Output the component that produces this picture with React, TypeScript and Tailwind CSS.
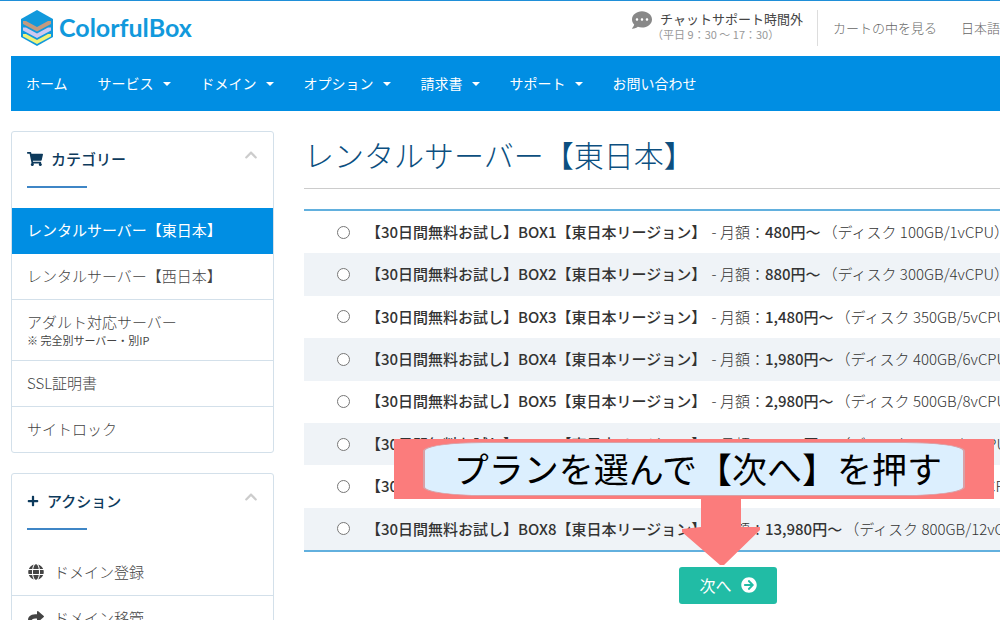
import type { ReactNode } from 'react';
import {
  FaArrowCircleRight,
  FaChevronUp,
  FaCommentDots,
  FaGlobe,
  FaPlus,
  FaShare,
  FaShoppingCart,
} from 'react-icons/fa';

const navItems = [
  { label: 'ホーム', menu: false },
  { label: 'サービス', menu: true },
  { label: 'ドメイン', menu: true },
  { label: 'オプション', menu: true },
  { label: '請求書', menu: true },
  { label: 'サポート', menu: true },
  { label: 'お問い合わせ', menu: false },
];

const categories = [
  { label: 'レンタルサーバー【東日本】', active: true },
  { label: 'レンタルサーバー【西日本】' },
  { label: 'アダルト対応サーバー', note: '※ 完全別サーバー・別IP' },
  { label: 'SSL証明書' },
  { label: 'サイトロック' },
];

const plans = [
  { name: 'BOX1', price: '480', spec: '100GB/1vCPU' },
  { name: 'BOX2', price: '880', spec: '300GB/4vCPU' },
  { name: 'BOX3', price: '1,480', spec: '350GB/5vCPU' },
  { name: 'BOX4', price: '1,980', spec: '400GB/6vCPU' },
  { name: 'BOX5', price: '2,980', spec: '500GB/8vCPU' },
  { name: 'BOX6', price: '4,980', spec: '600GB/8vCPU' },
  { name: 'BOX7', price: '7,980', spec: '700GB/10vCPU' },
  { name: 'BOX8', price: '13,980', spec: '800GB/12vCPU' },
];

function Logo() {
  return (
    <a href="#" className="flex items-center gap-1.5">
      <svg viewBox="0 0 32 36" className="h-9 w-8" aria-hidden="true">
        <path d="M16 0 32 9v18L16 36 0 27V9z" fill="#1199dc" />
        <path d="M2 11 5 11 16 17 27 11 30 11V14L16 21.500 2 14z" fill="#c39a80" />
        <path d="M2 17.500 5 17.500 16 23.500 27 17.500 30 17.500V20.500L16 28 2 20.500z" fill="#cfc8f0" />
        <path d="M2 24 5 24 16 30 27 24 30 24V26.500L16 34 2 26.500z" fill="#f0f278" />
      </svg>
      <span className="font-['Lato',sans-serif] text-[25px] font-bold text-[#1199dc]">ColorfulBox</span>
    </a>
  );
}

function PanelHeader({ icon, title }: { icon: ReactNode; title: string }) {
  return (
    <div className="flex h-[76px] items-start justify-between px-[15px] pt-4">
      <h2 className="relative flex h-10 items-start gap-2 text-[15px] leading-[22px] font-medium text-[#0d3a5c]">
        <span className="flex h-[22px] items-center">{icon}</span>
        {title}
        <span className="absolute bottom-0 left-0 h-0.5 w-[60px] bg-[#3f86c6]" />
      </h2>
      <button type="button" aria-label={`${title}を閉じる`} className="text-[#ccc]">
        <FaChevronUp className="size-3.5" />
      </button>
    </div>
  );
}

export default function App() {
  return (
    <div className="h-screen min-h-[620px] overflow-hidden border-t border-[#1f8fd8] bg-white pl-[11px] font-['Noto_Sans_CJK_JP',sans-serif] text-[#333]">
      <header className="flex h-[55px] items-center justify-between pb-0.5 pl-2.5">
        <Logo />
        <div className="flex items-center text-[13px] whitespace-nowrap text-[#666]">
          <div className="flex h-9 items-start gap-2 border-r border-[#ddd] pr-3.5">
            <FaCommentDots className="size-5 text-[#888]" />
            <div>
              <p className="leading-[18px] text-[#444]">チャットサポート時間外</p>
              <p className="-ml-2 text-[11px] leading-3 text-[#999]">（平日 9：30 〜 17：30）</p>
            </div>
          </div>
          <a href="#" className="ml-[15px] font-light">カートの中を見る</a>
          <a href="#" className="ml-6 font-light">日本語</a>
        </div>
      </header>

      <nav className="flex h-[55px] items-center gap-[30px] bg-[#008ee3] px-[15px] pb-0.5 text-sm whitespace-nowrap text-white">
        {navItems.map((item) => (
          <a key={item.label} href="#" className="flex items-center gap-[9px]">
            {item.label}
            {item.menu && <span className="mt-0.5 border-x-4 border-t-4 border-x-transparent border-t-white" />}
          </a>
        ))}
      </nav>

      <div className="flex items-start gap-[30px] pt-5">
        <aside className="flex w-[263px] shrink-0 flex-col gap-5">
          <section className="rounded-[3px] border border-[#d3e0ea]">
            <PanelHeader icon={<FaShoppingCart className="size-4" />} title="カテゴリー" />
            <ul className="text-[15px] leading-[23px]">
              {categories.map((cat) => (
                <li
                  key={cat.label}
                  className={
                    cat.active
                      ? 'border-b border-[#008ee3] bg-[#008ee3] text-white'
                      : 'border-b border-[#d3e0ea] font-light text-[#444] last:border-b-0'
                  }
                >
                  <a href="#" className="block px-[15px] pt-2.5 pb-3">
                    {cat.label}
                    {cat.note && <span className="block text-[11px] leading-[15px] font-normal">{cat.note}</span>}
                  </a>
                </li>
              ))}
            </ul>
          </section>

          <section className="rounded-[3px] border border-[#d3e0ea]">
            <PanelHeader icon={<FaPlus className="size-3" />} title="アクション" />
            <ul className="text-[15px] leading-[23px] font-light text-[#444]">
              <li className="border-b border-[#d3e0ea]">
                <a href="#" className="flex items-center gap-2.5 px-4 pt-2.5 pb-3">
                  <FaGlobe className="size-4" />
                  ドメイン登録
                </a>
              </li>
              <li>
                <a href="#" className="flex items-center gap-2.5 px-4 pt-2.5 pb-3">
                  <FaShare className="size-4" />
                  ドメイン移管
                </a>
              </li>
            </ul>
          </section>
        </aside>

        <main className="min-w-[848px] flex-1">
          <h1 className="h-[58px] border-b border-[#ccc] text-3xl leading-[46px] font-light text-[#0c4f80]">
            レンタルサーバー【東日本】
          </h1>

          <form className="pt-5">
            <div className="relative">
              <table className="h-[343px] w-full border-separate border-spacing-0 border-y-2 border-[#62b0de] text-[15px] whitespace-nowrap">
                <tbody>
                  {plans.map((plan) => (
                    <tr key={plan.name} className="even:bg-[#eff3f7]">
                      <td className="w-[62px] pl-[33px]">
                        <input
                          type="radio"
                          name="plan"
                          id={plan.name}
                          className="block size-[13px]"
                        />
                      </td>
                      <td>
                        <label htmlFor={plan.name} className="block font-light">
                          <b className="mr-0.5 font-medium">【30日間無料お試し】{plan.name}【東日本リージョン】</b> - 月額：
                          <b className="mr-0.5 font-medium">{plan.price}円〜</b>（ディスク {plan.spec}）
                        </label>
                      </td>
                    </tr>
                  ))}
                </tbody>
              </table>

              {/* Callout pointing at the next button */}
              <div className="absolute top-[230px] left-[90px] w-[600px]">
                <div className="h-[60px] bg-[#fb7c7c] px-[29px] py-[3px]">
                  <p className="h-[54px] rounded-[60px/9px] border-x-2 border-y border-[#d9a0a6] bg-[#dceffe] pl-2 text-center text-[35px] leading-[50px] whitespace-nowrap text-black">
                    プランを選んで【次へ】を押す
                  </p>
                </div>
                <svg viewBox="0 0 78 66" className="ml-72 h-[66px] w-[78px]" aria-hidden="true">
                  <path d="M19 0h40v28h19v3L42 66h-4L0 33v-3l19-2z" fill="#fb7c7c" />
                </svg>
              </div>
            </div>

            <button
              type="submit"
              className="mx-auto mt-[15px] flex h-[37px] items-center gap-[9px] rounded-[3px] bg-[#21bca5] px-5 pb-0.5 text-base text-white"
            >
              次へ
              <FaArrowCircleRight className="size-4" />
            </button>
          </form>
        </main>
      </div>
    </div>
  );
}
